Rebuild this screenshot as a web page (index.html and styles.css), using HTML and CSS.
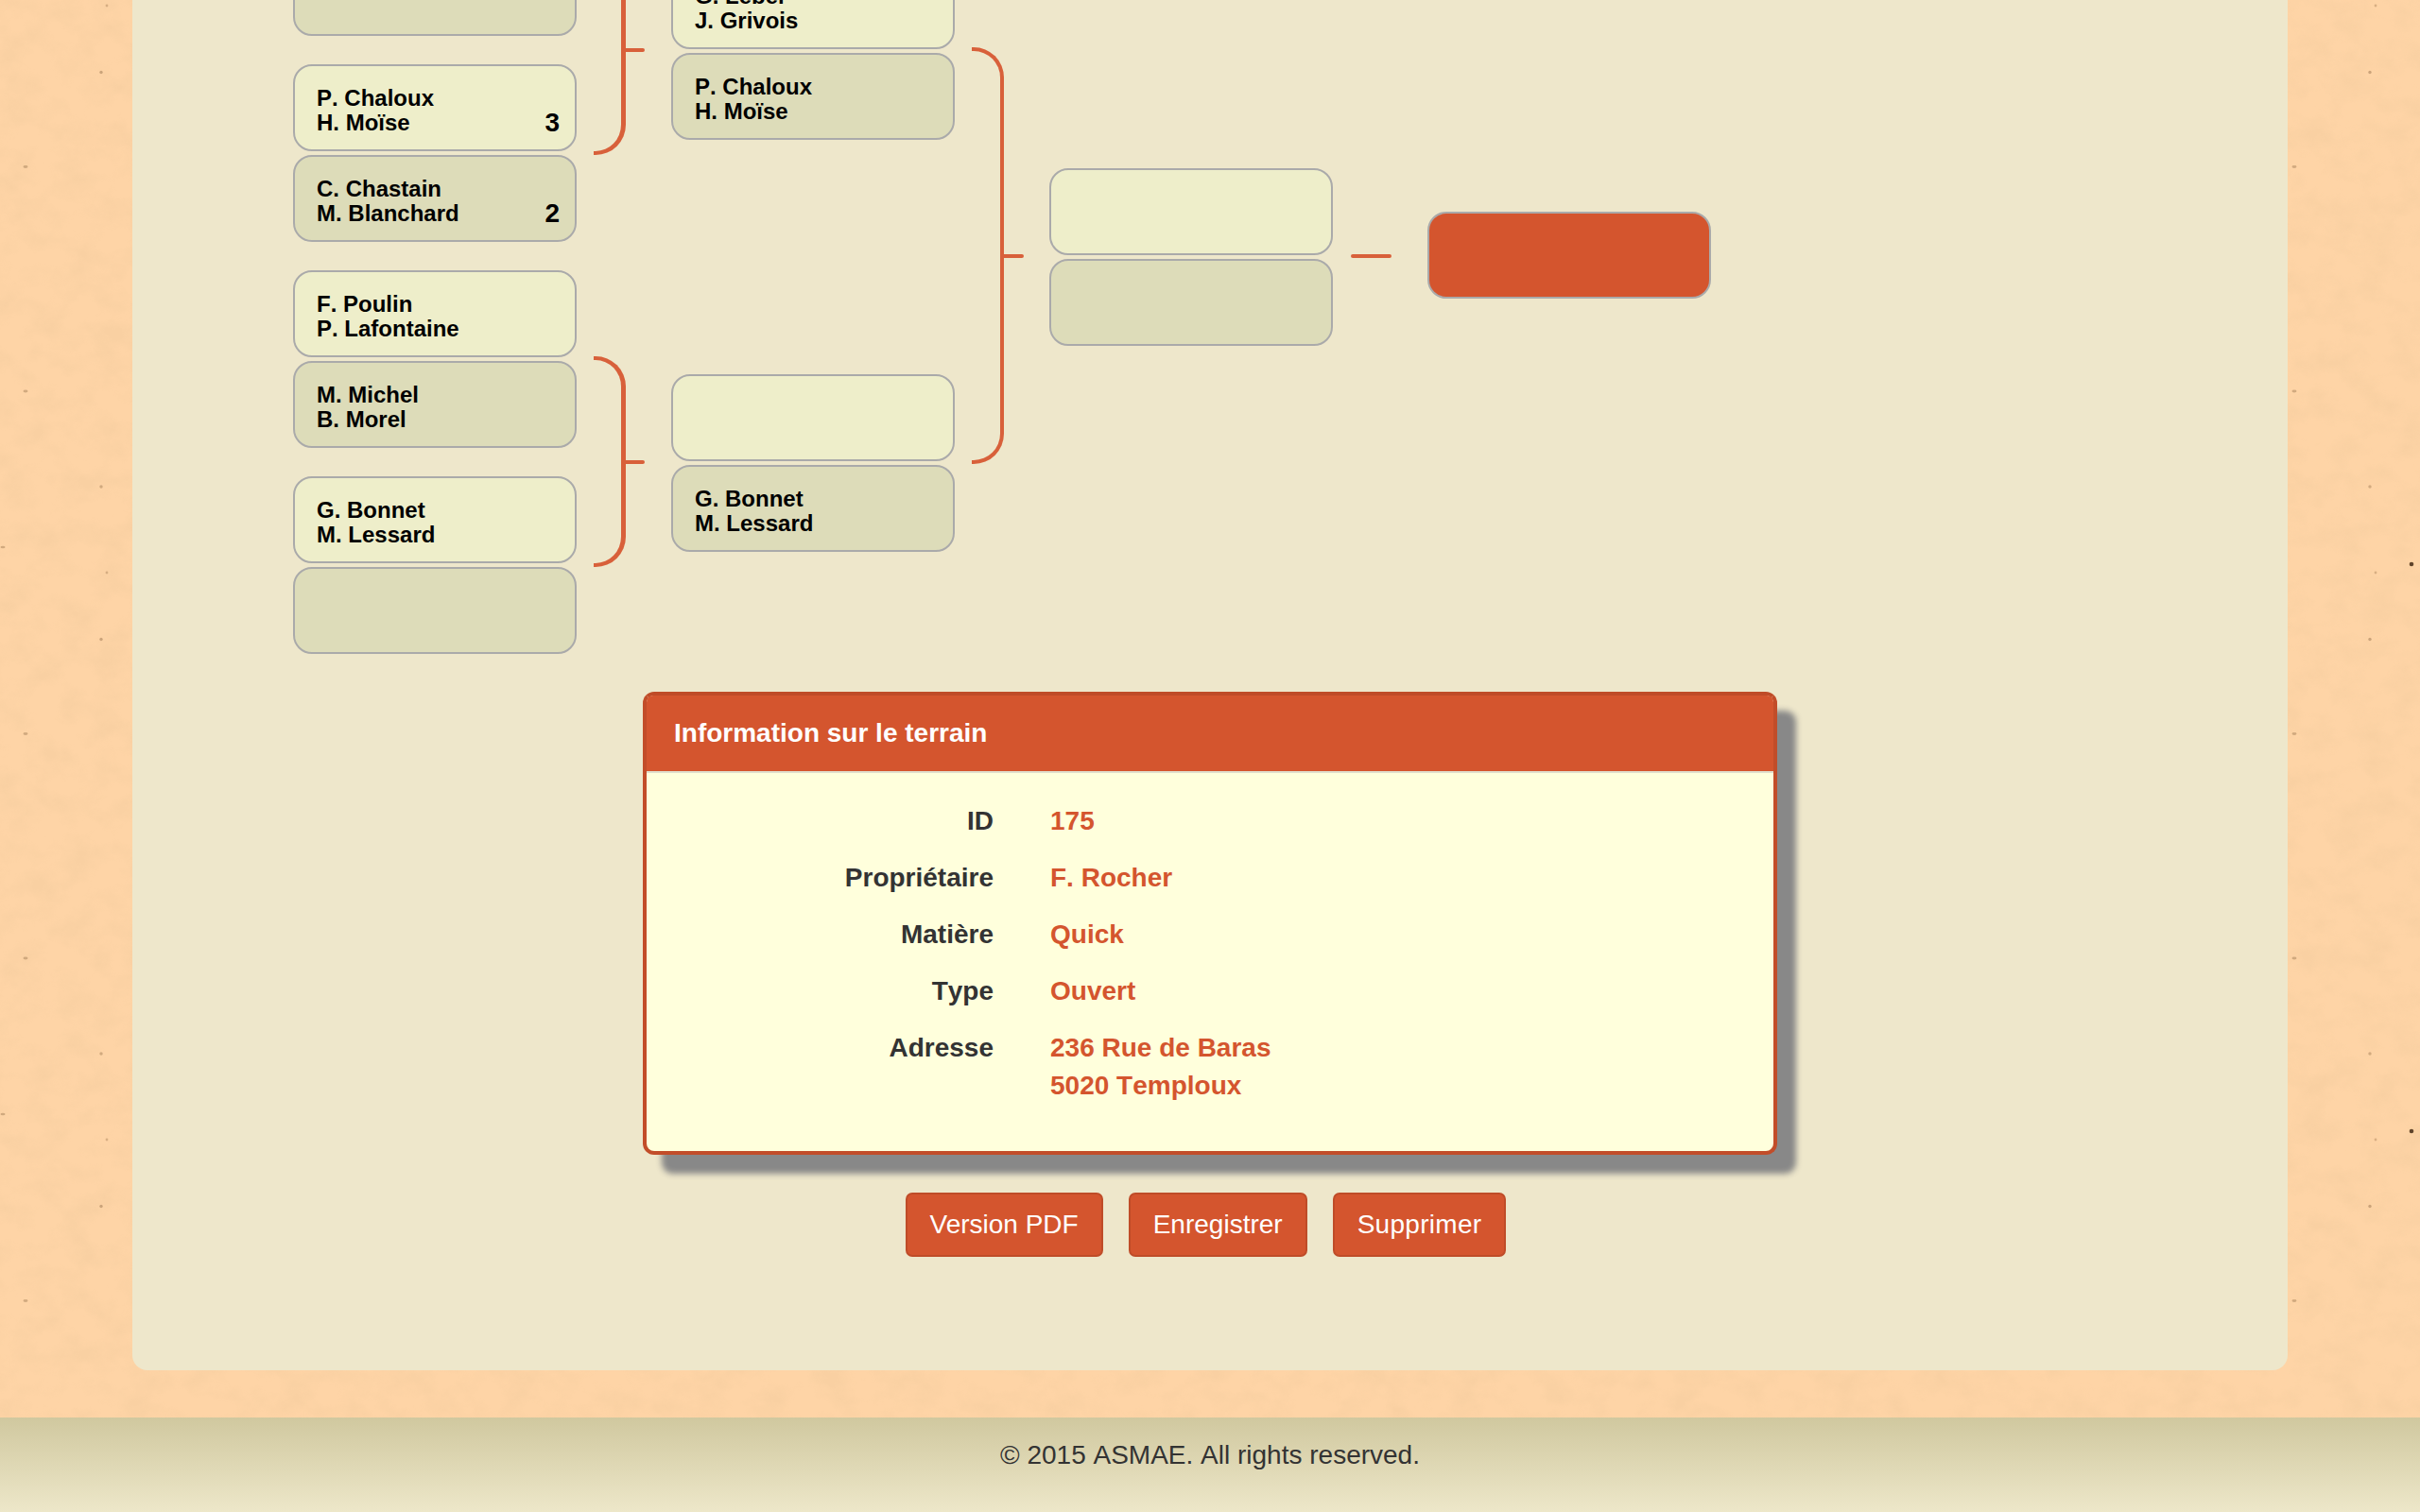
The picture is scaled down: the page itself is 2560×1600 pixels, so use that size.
FILE: index.html
```html
<!DOCTYPE html>
<html lang="fr">
<head>
<meta charset="utf-8">
<title>Tournoi - Information sur le terrain</title>
<link rel="stylesheet" href="styles.css">
</head>
<body>
<svg class="paper" width="2560" height="1600" aria-hidden="true">
  <defs>
    <filter id="mottle" x="0" y="0" width="100%" height="100%">
      <feTurbulence type="fractalNoise" baseFrequency="0.03 0.038" numOctaves="5" seed="7"/>
      <feColorMatrix values="0 0 0 0 0.89  0 0 0 0 0.60  0 0 0 0 0.34  2.6 0 0 0 -1.05"/>
    </filter>
    <filter id="soft" x="-5%" y="-5%" width="110%" height="110%">
      <feGaussianBlur stdDeviation="0.7"/>
    </filter>
    <pattern id="specks" width="600" height="600" patternUnits="userSpaceOnUse">
      <g fill="#8f6b45">
        <ellipse cx="27" cy="176.5" rx="2.5" ry="1.4" opacity=".4"/>
        <ellipse cx="27" cy="414" rx="2.5" ry="1.4" opacity=".4"/>
        <circle cx="107" cy="76.5" r="1.7" opacity=".45"/>
        <circle cx="107" cy="515" r="1.7" opacity=".4"/>
        <circle cx="113" cy="6" r="1.4" opacity=".35"/>
        <ellipse cx="3" cy="579" rx="2.5" ry="1.2" opacity=".4"/>
      </g>
      <circle cx="151" cy="597" r="2.3" fill="#4f351c" opacity=".9"/>
    </pattern>
  </defs>
  <rect width="2560" height="1600" filter="url(#mottle)" opacity=".4"/>
  <rect width="2560" height="1600" fill="url(#specks)" filter="url(#soft)"/>
</svg>

<main class="panel">
  <section class="tree">
    <div class="round">
      <div class="group">
        <div class="pair">
          <div class="box box-light"></div>
          <div class="box box-dark"></div>
        </div>
        <div class="pair">
          <div class="box box-light"><div class="names">P. Chaloux<br>H. Moïse</div><div class="score">3</div></div>
          <div class="box box-dark"><div class="names">C. Chastain<br>M. Blanchard</div><div class="score">2</div></div>
        </div>
        <div class="bracket"></div>
      </div>
      <div class="group">
        <div class="pair">
          <div class="box box-light"><div class="names">F. Poulin<br>P. Lafontaine</div></div>
          <div class="box box-dark"><div class="names">M. Michel<br>B. Morel</div></div>
        </div>
        <div class="pair">
          <div class="box box-light"><div class="names">G. Bonnet<br>M. Lessard</div></div>
          <div class="box box-dark"></div>
        </div>
        <div class="bracket"></div>
      </div>
    </div>

    <div class="round round-semi">
      <div class="group">
        <div class="pair">
          <div class="box box-light"><div class="names">G. Lebel<br>J. Grivois</div></div>
          <div class="box box-dark"><div class="names">P. Chaloux<br>H. Moïse</div></div>
        </div>
        <div class="pair">
          <div class="box box-light"></div>
          <div class="box box-dark"><div class="names">G. Bonnet<br>M. Lessard</div></div>
        </div>
        <div class="bracket"></div>
      </div>
    </div>

    <div class="round round-final">
      <div class="pair pair-final">
        <div class="box box-light"></div>
        <div class="box box-dark"></div>
      </div>
    </div>

    <div class="round round-winner">
      <div class="box box-winner"></div>
    </div>
  </section>

  <section class="card">
    <h2 class="card-title">Information sur le terrain</h2>
    <dl class="facts">
      <dt>ID</dt><dd>175</dd>
      <dt>Propriétaire</dt><dd>F. Rocher</dd>
      <dt>Matière</dt><dd>Quick</dd>
      <dt>Type</dt><dd>Ouvert</dd>
      <dt>Adresse</dt><dd>236 Rue de Baras<br>5020 Temploux</dd>
    </dl>
  </section>

  <div class="actions">
    <button class="btn" type="button">Version PDF</button>
    <button class="btn" type="button">Enregistrer</button>
    <button class="btn btn-spaced" type="button">Supprimer</button>
  </div>
</main>

<footer class="footer">© 2015 ASMAE. All rights reserved.</footer>
</body>
</html>
```
FILE: styles.css
```css
* { box-sizing: border-box; }

html, body {
  margin: 0;
  height: 1600px;
  overflow: hidden;
}

body {
  position: relative;
  background: #fed4a6;
  font-family: "Liberation Sans", Arial, sans-serif;
  font-kerning: none;
  color: #333;
}

.paper {
  position: absolute;
  top: 0;
  left: 0;
  z-index: -1;
}

.panel {
  margin: -200px 140px 0;
  padding: 50px 0 120px;
  height: 1650px;
  background: #eee7cb;
  border-radius: 16px;
}

/* tournament tree */
.tree {
  display: flex;
  gap: 100px;
  padding-left: 170px;
  height: 842px;
}

.round {
  width: 300px;
  display: flex;
  flex-direction: column;
  gap: 30px;
}

.round-semi { margin-top: 110px; }
.round-final { margin-top: 328px; }
.round-winner { margin-top: 374px; }

.group {
  position: relative;
  display: flex;
  flex-direction: column;
  gap: 30px;
}

.round-semi .group { gap: 248px; }

.pair {
  display: flex;
  flex-direction: column;
  gap: 4px;
}

.box {
  height: 92px;
  padding: 20px 16px 15px 23px;
  display: flex;
  justify-content: space-between;
  align-items: flex-end;
  border: 2px solid #aaa;
  border-radius: 20px;
  color: #000;
  font-size: 24px;
  font-weight: 700;
  line-height: 26px;
}

.box-light { background: #eeeeca; }
.box-dark { background: #dddcb9; }
.box-winner { background: #d4552e; }

.score {
  font-size: 28px;
}

/* connectors */
.bracket {
  position: absolute;
  top: 91px;
  bottom: 92px;
  left: calc(100% + 18px);
  width: 34px;
  border: 5px solid #d8603a;
  border-width: 4px 5px 4px 0;
  border-radius: 0 32px 32px 0;
}

.round-semi .bracket {
  top: 90px;
  bottom: 93px;
  border-width: 4px 4px 4px 0;
}

.bracket::after {
  content: "";
  position: absolute;
  left: 100%;
  top: calc(50% - 2px);
  width: 25px;
  height: 4px;
  border-radius: 0 2px 2px 0;
  background: #d8603a;
}

.pair-final { position: relative; }

.pair-final::after {
  content: "";
  position: absolute;
  left: calc(100% + 19px);
  top: 91px;
  width: 43px;
  height: 4px;
  border-radius: 2px;
  background: #d8603a;
}

/* information card */
.card {
  width: 1200px;
  margin: 40px auto;
  border: 4px solid #c24d29;
  border-top-color: #bf4c28;
  border-radius: 12px;
  background: #ffffdc;
  box-shadow: 20px 20px 6px #888;
}

.card-title {
  height: 82px;
  margin: 0;
  padding: 0 29px;
  background: #d4552e;
  border-bottom: 2px solid #e0dfcd;
  border-radius: 7px 7px 0 0;
  color: #fff;
  font-size: 28px;
  font-weight: 700;
  line-height: 80px;
}

.facts {
  display: grid;
  grid-template-columns: 367px 1fr;
  column-gap: 60px;
  row-gap: 20px;
  margin: 0;
  padding: 31px 0 49px;
  font-size: 28px;
  font-weight: 700;
  line-height: 40px;
}

.facts dt {
  text-align: right;
  color: #333;
}

.facts dd {
  margin: 0;
  color: #d4552e;
}

/* buttons */
.actions {
  display: flex;
  justify-content: center;
  gap: 27px;
  padding-right: 9px;
}

.btn {
  height: 68px;
  padding: 0 24px;
  border: 2px solid #bf4c28;
  border-radius: 7px;
  background: #d4552e;
  color: #fff;
  font-family: inherit;
  font-size: 28px;
  font-kerning: normal;
  line-height: 1;
}

.btn-spaced {
  letter-spacing: 0.3px;
}

/* footer */
.footer {
  height: 100px;
  margin-top: 50px;
  padding-top: 22px;
  text-align: center;
  background: linear-gradient(#d0c89f, #ede7c9);
  font-size: 28px;
  line-height: 36px;
  color: #333;
}
```
